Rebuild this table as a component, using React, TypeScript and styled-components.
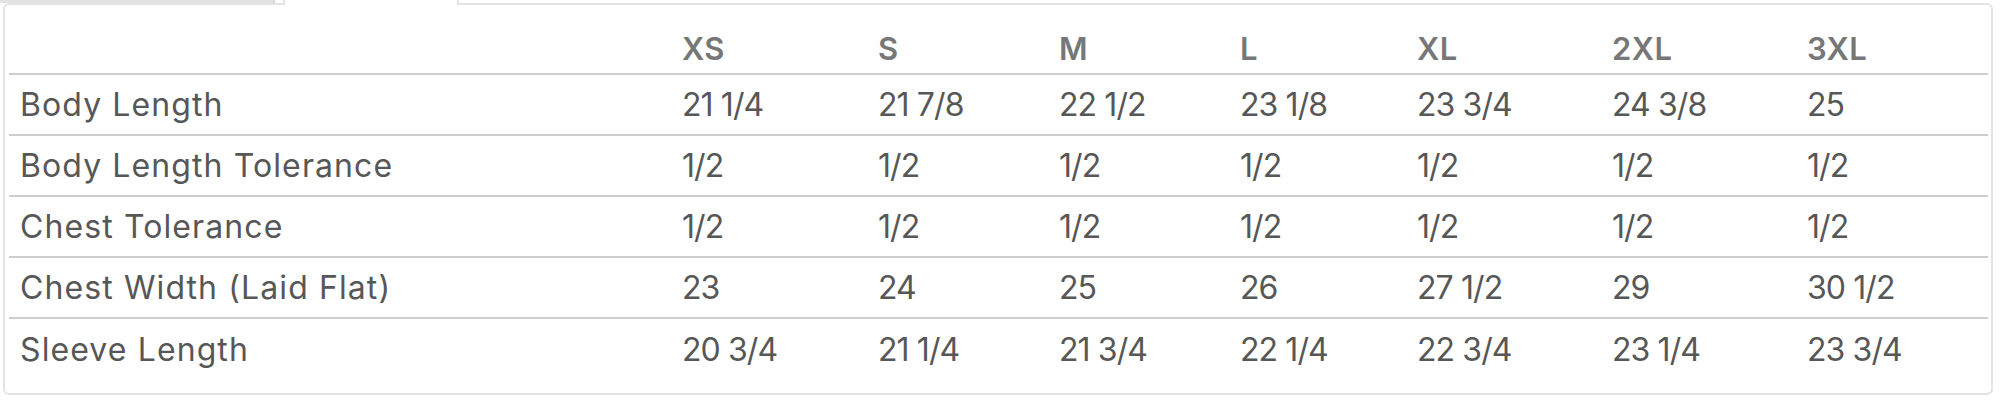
import styled, { createGlobalStyle } from 'styled-components'

const sizes = ['XS', 'S', 'M', 'L', 'XL', '2XL', '3XL']

const measurements: { label: string; values: string[] }[] = [
    { label: 'Body Length', values: ['21 1/4', '21 7/8', '22 1/2', '23 1/8', '23 3/4', '24 3/8', '25'] },
    { label: 'Body Length Tolerance', values: ['1/2', '1/2', '1/2', '1/2', '1/2', '1/2', '1/2'] },
    { label: 'Chest Tolerance', values: ['1/2', '1/2', '1/2', '1/2', '1/2', '1/2', '1/2'] },
    { label: 'Chest Width (Laid Flat)', values: ['23', '24', '25', '26', '27 1/2', '29', '30 1/2'] },
    { label: 'Sleeve Length', values: ['20 3/4', '21 1/4', '21 3/4', '22 1/4', '22 3/4', '23 1/4', '23 3/4'] },
]

export default function App() {
    return (
        <>
            <GlobalStyle />
            <Page>
                <TabRow>
                    <Tab />
                    <ActiveTab />
                </TabRow>
                <Panel>
                    <HeaderRow>
                        <HeadCell />
                        {sizes.map((s) => (
                            <HeadCell key={s}>{s}</HeadCell>
                        ))}
                    </HeaderRow>
                    {measurements.map((m) => (
                        <Row key={m.label}>
                            <Cell $label>{m.label}</Cell>
                            {m.values.map((v, i) => (
                                <Cell key={i}>{v}</Cell>
                            ))}
                        </Row>
                    ))}
                </Panel>
            </Page>
        </>
    )
}

const GlobalStyle = createGlobalStyle`
    html, body {
        margin: 0;
        background: #fff;
    }
    body {
        font-family: Inter, "Open Sans", sans-serif;
    }
`

const Page = styled.div`
    width: 2011px;
    height: 404px;
    overflow: hidden;
`

const TabRow = styled.div`
    display: flex;
    align-items: flex-start;
    height: 3px;
`

const Tab = styled.div`
    width: 273px;
    height: 3px;
    background: #e3e3e3;
    border-right: 2px solid #d8d8d8;
`

const ActiveTab = styled.div`
    position: relative;
    z-index: 1;
    margin-left: 8px;
    width: 172px;
    height: 5px;
    background: #fff;
    border-left: 2px solid #e4e4e4;
    border-right: 2px solid #e4e4e4;
`

const Panel = styled.div`
    margin: 0 18px 0 3px;
    padding: 19px 3px 13px 4px;
    border: 2px solid #e4e4e4;
    border-radius: 6px;
    background: #fff;
`

const Row = styled.div`
    display: grid;
    grid-template-columns: 662px 196px 181px 181px 177px 195px 195px 1fr;
    align-items: center;
    height: 61px;
    box-sizing: border-box;
    border-bottom: 2px solid #cdcdcd;

    &:last-child {
        border-bottom: none;
    }
`

const HeaderRow = styled(Row)`
    height: 51px;
`

const Cell = styled.div<{ $label?: boolean }>`
    padding: 0 0 0 11px;
    font-size: 32px;
    letter-spacing: ${(p) => (p.$label ? '1.1px' : '-0.9px')};
    color: #575757;
    white-space: nowrap;
`

const HeadCell = styled.div`
    padding: 0 0 0 11px;
    font-size: 31px;
    font-weight: 600;
    letter-spacing: 0.4px;
    color: #777;
    white-space: nowrap;
`
